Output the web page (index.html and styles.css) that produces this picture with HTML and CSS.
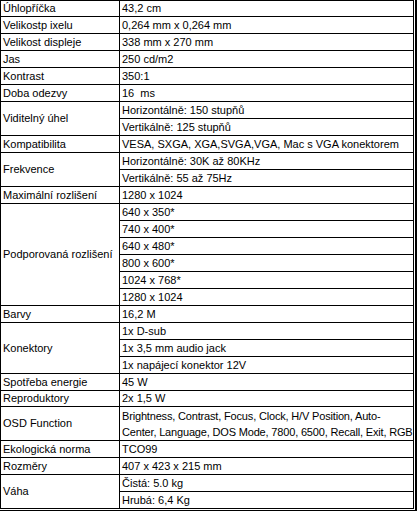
FILE: index.html
```html
<!DOCTYPE html>
<html lang="cs">
<head>
<meta charset="utf-8">
<title>Specifikace</title>
<link rel="stylesheet" href="styles.css">
</head>
<body>
<div class="sheet">
<table class="spec">
<colgroup><col class="c-label"><col class="c-value"></colgroup>
<tbody>
<tr class="short"><td>Úhlopříčka</td><td>43,2 cm</td></tr>
<tr><td>Velikostp ixelu</td><td>0,264 mm x 0,264 mm</td></tr>
<tr><td>Velikost displeje</td><td>338 mm x 270 mm</td></tr>
<tr><td>Jas</td><td>250 cd/m2</td></tr>
<tr><td>Kontrast</td><td>350:1</td></tr>
<tr><td>Doba odezvy</td><td>16&nbsp; ms</td></tr>
<tr><td rowspan="2">Viditelný úhel</td><td>Horizontálně: 150 stupňů</td></tr>
<tr><td>Vertikálně: 125 stupňů</td></tr>
<tr><td>Kompatibilita</td><td>VESA, SXGA, XGA,SVGA,VGA, Mac s VGA konektorem</td></tr>
<tr><td rowspan="2">Frekvence</td><td>Horizontálně: 30K až 80KHz</td></tr>
<tr><td>Vertikálně: 55 až 75Hz</td></tr>
<tr><td>Maximální rozlišení</td><td>1280 x 1024</td></tr>
<tr><td rowspan="6">Podporovaná rozlišení</td><td>640 x 350*</td></tr>
<tr><td>740 x 400*</td></tr>
<tr><td>640 x 480*</td></tr>
<tr><td>800 x 600*</td></tr>
<tr><td>1024 x 768*</td></tr>
<tr><td>1280 x 1024</td></tr>
<tr><td>Barvy</td><td>16,2 M</td></tr>
<tr><td rowspan="3">Konektory</td><td>1x D-sub</td></tr>
<tr><td>1x 3,5 mm audio jack</td></tr>
<tr><td>1x napájecí konektor 12V</td></tr>
<tr><td>Spotřeba energie</td><td>45 W</td></tr>
<tr class="short"><td>Reproduktory</td><td>2x 1,5 W</td></tr>
<tr class="double"><td>OSD Function</td><td class="osd">Brightness, Contrast, Focus, Clock, H/V Position, Auto-<br>Center, Language, DOS Mode, 7800, 6500, Recall, Exit, RGB</td></tr>
<tr><td>Ekologická norma</td><td>TCO99</td></tr>
<tr><td>Rozměry</td><td>407 x 423 x 215 mm</td></tr>
<tr><td rowspan="2">Váha</td><td>Čistá: 5.0 kg</td></tr>
<tr><td>Hrubá: 6,4 Kg</td></tr>
</tbody>
</table>
</div>
</body>
</html>
```
FILE: styles.css
```css
html, body {
  margin: 0;
  padding: 0;
  background: #ffffff;
}

.sheet {
  display: inline-block;
  padding: 0 1px 1px 0;
  border-right: 2px solid #000000;
  border-bottom: 2px solid #000000;
}

.spec {
  border-collapse: collapse;
  table-layout: fixed;
  width: 414px;
  font-family: "Liberation Sans", Arial, sans-serif;
  font-size: 11px;
  line-height: 15px;
  color: #000000;
}

.c-label { width: 119px; }

.spec td {
  border: 1px solid #000000;
  padding: 0 2px;
  vertical-align: middle;
  white-space: nowrap;
  overflow: visible;
}

.spec tr { height: 17px; }
.spec tr.short { height: 16px; }
.spec tr.double { height: 34px; }

.spec td.osd {
  line-height: 16px;
  letter-spacing: -0.17px;
  padding-right: 0;
}
```
